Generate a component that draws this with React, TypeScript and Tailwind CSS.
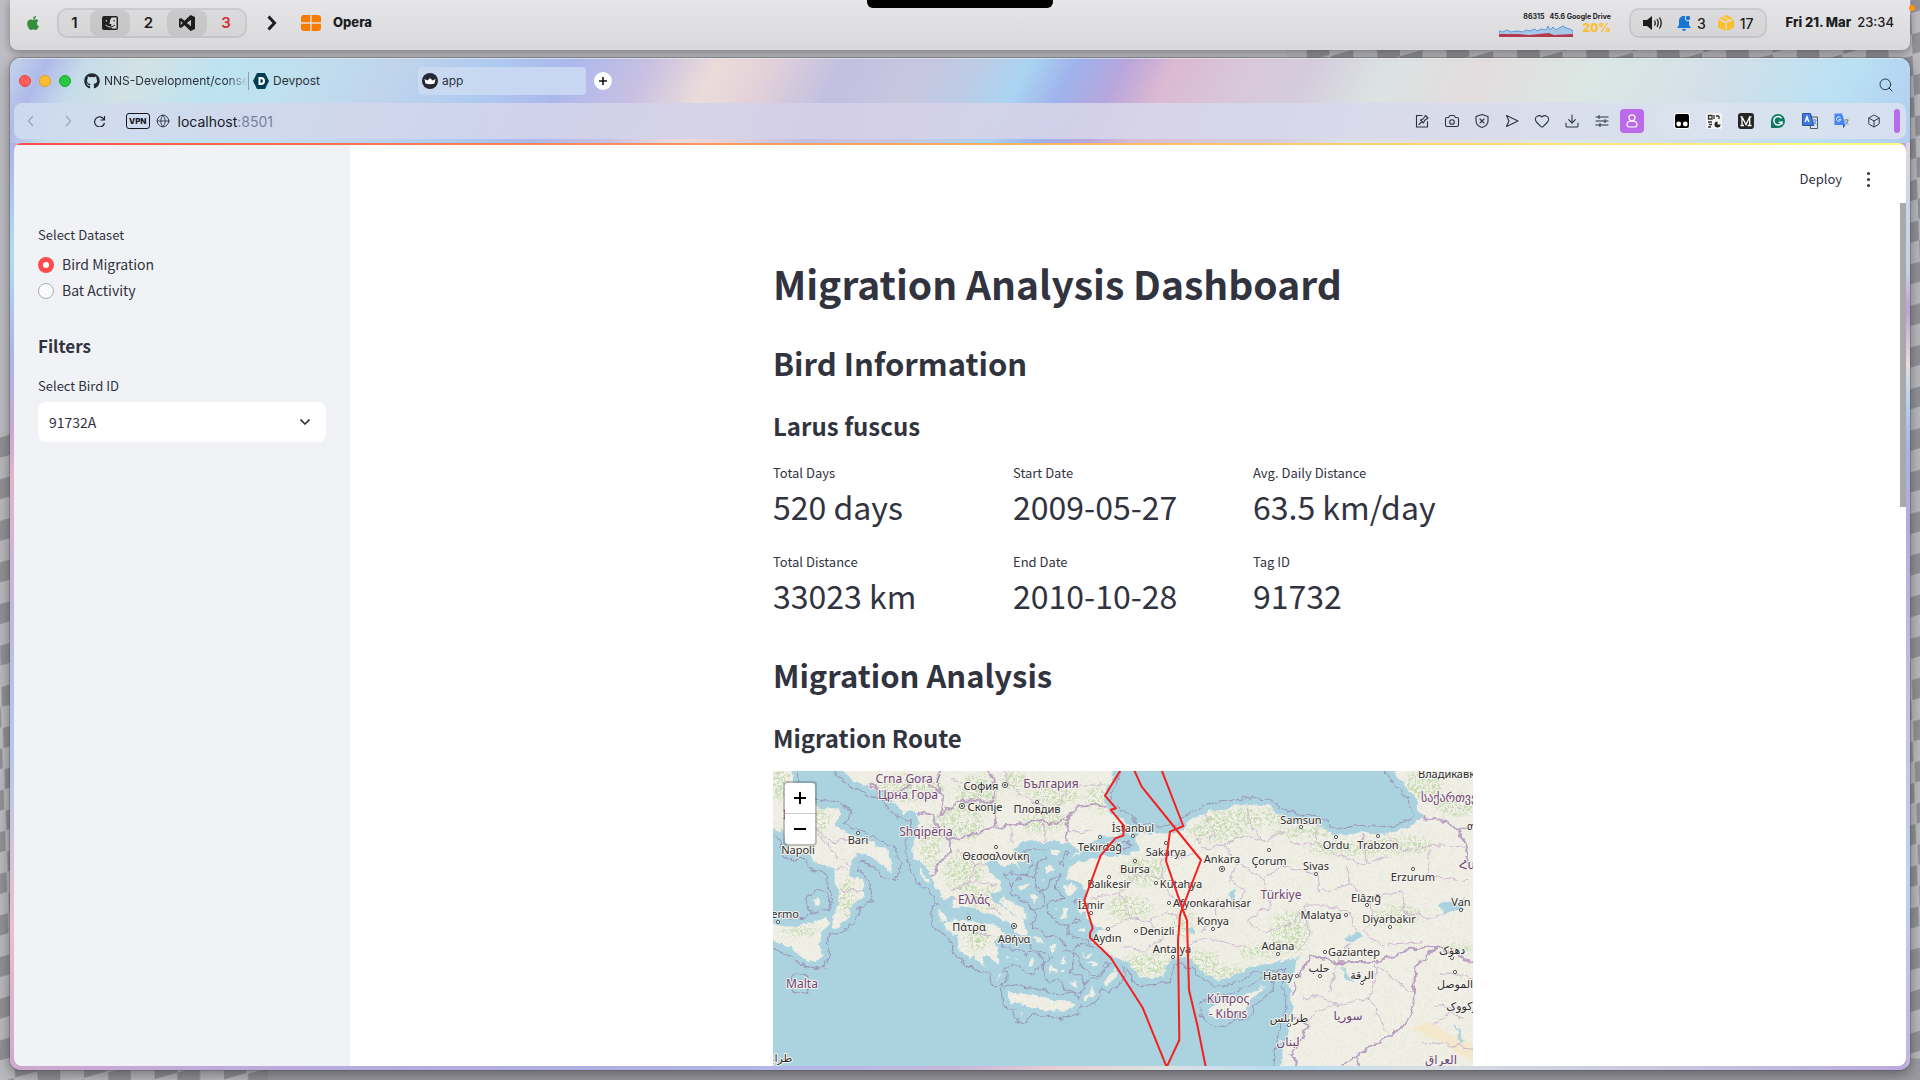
import { useState, type ReactNode } from 'react'
import { FaApple, FaGithub } from 'react-icons/fa'
import { Box, Download, Globe, Heart, Search } from 'lucide-react'

const metrics = [
  { label: 'Total Days', value: '520 days' },
  { label: 'Start Date', value: '2009-05-27' },
  { label: 'Avg. Daily Distance', value: '63.5 km/day' },
  { label: 'Total Distance', value: '33023 km' },
  { label: 'End Date', value: '2010-10-28' },
  { label: 'Tag ID', value: '91732' },
]

// [text, x, baseline, anchor]
type Label = [string, number, number, ('start' | 'middle' | 'end')?]

const countries: Label[] = [
  ['Crna Gora /', 135, 12],
  ['Црна Гора', 135, 28],
  ['България', 278, 17],
  ['Shqipëria', 153, 65],
  ['Italia', 10, 48, 'start'],
  ['Ελλάς', 201, 133],
  ['Malta', 29, 217],
  ['Türkiye', 508, 128],
  ['Κύπρος', 455, 232],
  ['- Kıbrıs', 455, 247],
  ['لبنان', 515, 275],
  ['سوريا', 575, 249],
  ['العراق', 668, 293],
  ['საქართველო', 648, 31, 'start'],
  ['Հայաստան', 686, 98, 'start'],
]

const cities: Label[] = [
  ['София', 208, 19],
  ['Скопје', 212, 40],
  ['Пловдив', 264, 42],
  ['Bari', 85, 73],
  ['Napoli', 25, 83],
  ['Θεσσαλονίκη', 223, 89],
  ['Tekirdağ', 327, 80],
  ['İstanbul', 360, 61],
  ['Bursa', 362, 102],
  ['Balıkesir', 336, 117],
  ['İzmir', 318, 138],
  ['Aydın', 334, 171],
  ['Πάτρα', 196, 160],
  ['Αθήνα', 241, 172],
  ['Palermo', 26, 147, 'end'],
  ['طرابلس', 0, 291],
  ['Sakarya', 393, 85],
  ['Ankara', 449, 92],
  ['Çorum', 496, 94],
  ['Samsun', 528, 53],
  ['Ordu', 563, 78],
  ['Trabzon', 605, 78],
  ['Sivas', 543, 99],
  ['Kütahya', 408, 117],
  ['Afyonkarahisar', 439, 136],
  ['Konya', 440, 154],
  ['Denizli', 384, 164],
  ['Antalya', 399, 182],
  ['Adana', 505, 179],
  ['Malatya', 548, 148],
  ['Elâzığ', 593, 131],
  ['Diyarbakır', 616, 152],
  ['Erzurum', 640, 110],
  ['Van', 688, 135],
  ['Gaziantep', 581, 185],
  ['Hatay', 505, 209],
  ['حلب', 546, 201],
  ['الرقة', 589, 208],
  ['دهۆک', 679, 183],
  ['الموصل', 682, 217],
  ['کرکووک', 692, 239],
  ['طرابلس', 516, 251],
  ['Владикавказ', 645, 7, 'start'],
  ['თბილისი', 694, 59, 'start'],
]

const cityDots = [
  [264, 31], [85, 62], [223, 76], [327, 66], [360, 65], [362, 90], [336, 106], [318, 142], [335, 158],
  [196, 147], [5, 151], [393, 72], [496, 79], [528, 56], [563, 66], [605, 65], [543, 103], [383, 112],
  [396, 132], [440, 158], [363, 160], [400, 186], [505, 183], [573, 144], [594, 134], [617, 156],
  [640, 98], [688, 139], [552, 181], [524, 205], [547, 205], [589, 212], [679, 187], [682, 201], [516, 254],
]

const capitalDots = [[232, 14], [189, 35], [241, 155], [449, 98]]

// Coastlines are stored at three times the drawn size
const landPath = [
  // Italy and Sicily
  'M0 0L60 0L68 60L85 100L150 130L205 130L218 150L200 165L195 180L250 212L300 232L350 260L372 290L366 322L342 310L322 285L290 270L262 264L245 285L240 332L278 350L284 398L245 418L240 450L208 486L182 484L196 440L210 405L195 350L190 312L168 300L135 295L122 262L60 262L40 197L0 185Z',
  'M0 470L60 485L110 477L165 455L178 468L155 505L150 545L157 570L140 592L110 583L60 550L0 522Z',
  // Balkans and mainland Greece
  'M200 0L250 45L300 68L340 85L370 112L400 145L440 140L447 170L440 200L430 235L430 280L462 300L485 335L500 372L520 402L550 398L545 430L600 425L640 445L690 455L720 475L735 500L752 512L772 505L765 470L735 447L700 425L668 408L660 382L700 376L690 350L650 310L640 288L680 285L702 310L722 290L755 312L742 288L768 292L735 262L750 235L800 230L860 232L900 235L925 262L900 290L935 262L960 232L990 218L1030 214L1062 204L1088 212L1080 185L1060 165L1012 132L1000 90L1020 50L1036 0Z',
  'M520 480L560 462L620 472L690 490L702 510L672 522L692 590L685 602L660 570L640 575L647 606L625 590L615 570L600 580L572 560L560 510L535 497Z',
  'M700 396L752 430L778 458L764 466L722 442L690 410Z',
  // Anatolia, the Caucasus and the Levant
  'M1098 215L1110 200L1190 206L1240 195L1256 168L1296 148L1350 130L1440 117L1500 125L1516 142L1570 170L1650 182L1690 216L1770 202L1850 206L1910 190L1955 160L1935 95L1890 45L1860 0L2130 0L2130 920L1530 920L1550 800L1570 720L1555 660L1570 620L1585 576L1540 590L1510 596L1450 600L1390 635L1340 645L1290 610L1250 572L1210 574L1192 600L1180 635L1110 640L1080 592L1040 580L1010 570L978 532L966 512L1000 492L962 472L950 450L925 440L942 405L952 382L930 352L890 342L895 305L925 290L1000 272L1060 272L1110 256Z',
  'M1315 730L1350 715L1395 700L1488 664L1435 710L1425 740L1380 750L1340 762L1315 747Z',
  // Crete, Rhodes and the smaller islands
  'M716 682L770 686L800 695L850 706L905 706L912 724L882 740L830 735L780 725L720 710Z',
  'M1002 655L1020 625L1040 612L1040 635L1012 660Z',
  'M946 705L970 660L974 690Z',
  'M820 305L845 298L855 315L830 325Z',
  'M878 365L905 358L925 375L900 390Z',
  'M876 425L895 428L892 462L878 458Z',
  'M915 495L945 488L940 500Z',
  'M843 256L862 254L862 270L848 270Z',
  'M440 306L462 322L480 350L468 348Z',
  'M505 438L528 445L532 470L510 472Z',
  'M742 372L770 352L776 362L756 380Z',
  'M780 385L802 400L798 412L784 402Z',
  'M790 512L812 520L824 545L800 530Z',
  'M838 545L850 560L862 545L852 535Z',
  'M770 596L790 580L796 592L780 604Z',
  'M836 615L850 600L862 616L842 630Z',
  'M866 590L890 575L886 596Z',
  'M868 618L884 612L882 628Z',
  'M900 658L916 645L922 662Z',
  'M950 590L985 595L975 608Z',
  'M935 560L965 572L958 578Z',
  'M750 742L764 744L756 754Z',
  'M88 648L104 654L98 664L86 658Z',
  'M128 408L148 398L158 412L140 420Z',
  'M680 626L690 632L682 642Z',
  'M814 342L822 340L820 352Z',
  'M850 430L862 430L856 438Z',
  'M710 570L722 574L714 584Z',
  'M738 576L746 578L742 586Z',
].join('')

const woods = [
  [1420, 160, 130, 28], [1340, 200, 90, 26], [1600, 200, 90, 16], [1740, 250, 130, 22], [1900, 240, 90, 26],
  [1120, 320, 70, 40], [1080, 430, 70, 34], [1130, 600, 80, 34], [1290, 590, 60, 36], [1380, 620, 70, 18],
  [1560, 500, 60, 60], [1470, 560, 70, 18], [1880, 450, 80, 30], [1960, 60, 60, 40], [2060, 120, 60, 34],
  [560, 180, 80, 50], [620, 90, 60, 60], [820, 170, 70, 30], [850, 90, 80, 30], [990, 100, 40, 40],
  [420, 70, 100, 40], [580, 320, 60, 60], [650, 400, 60, 30], [480, 250, 30, 60], [620, 520, 40, 40],
  [230, 400, 26, 60], [150, 160, 30, 40], [90, 500, 60, 14], [30, 60, 30, 50], [730, 50, 40, 30], [1240, 470, 26, 50],
  [2070, 550, 50, 14],
]

const borders =
  'M540 225L600 210L660 190L740 180L800 165L850 180L900 152L925 125L985 120L1010 130M445 140L490 150L512 215L545 225L540 262L502 298L495 332L478 332M640 0L680 60L665 110L680 182M300 60L360 92L420 62L450 38L520 90L512 150L560 110L670 110M515 90L500 40L520 0M900 152L890 180L890 232M1585 640L1620 575L1700 592L1830 590L1910 556L2000 545L1936 605L1930 720L1908 782L1710 903M2000 545L2050 570L2110 592M1955 160L2025 165L2062 195L2096 250L2090 310M2062 195L2110 180M1570 755L1612 780L1600 822L1560 870M1560 870L1590 903M1760 870L1770 910M1575 650L1570 690'

const provinces =
  'M60 60L100 110L140 200L190 262L240 300M135 190L180 230L240 225M195 312L245 310M210 380L280 370M700 18L720 60L780 110L860 130L900 60L1000 60M540 40L600 60L640 100M560 250L620 300L600 350L540 380M600 350L680 360M620 300L660 290M520 400L640 410L700 450M600 500L670 510M720 180L730 230M820 180L830 230M890 200L960 200M1280 220L1300 250L1360 240L1420 210L1480 230L1540 200M1300 140L1330 200L1320 230M1430 120L1440 180L1480 230M1540 200L1570 240L1640 230L1700 270L1780 300L1850 270M1640 180L1640 230M1780 210L1790 300M1850 206L1880 260L1980 240L2090 250M1360 240L1400 290L1380 340L1420 380L1400 430M1400 290L1480 340L1540 300L1640 330L1650 380L1740 360L1800 400L1900 380M1480 340L1500 420L1430 470L1480 500L1560 480L1600 420L1660 420L1740 440M1600 420L1620 520L1580 560M1740 360L1730 300M1800 400L1810 460L1780 500L1830 540L1960 530M1900 380L1900 440L1990 460L2090 400M1980 240L1970 330L2090 350M1100 330L1180 340L1210 400L1290 420L1400 430M1180 340L1170 280L1270 270M1100 330L1050 380L960 400M1050 380L1080 460L1000 500M1080 460L1140 470L1180 520L1120 560L1060 540M1140 470L1190 440L1230 460M1230 560L1290 520L1360 530L1430 550M1340 400L1340 470L1290 500M1700 592L1760 500L1740 440M1820 600L1800 700L1850 800M1800 700L1700 720L1640 690L1600 700M1820 600L1930 690M1700 592L1680 680M1600 800L1640 740L1700 720M1990 720L2110 740M2010 620L2110 640M1990 780L2040 740L2080 760M1960 830L2110 850'

const routeWest =
  'M1050 0L1050 18L1005 92L1038 130L1022 134L1062 183L1060 212L1036 220L992 272L943 405L968 490L960 505L960 518L1022 578L1118 728L1190 906L1228 825L1224 530L1230 450L1237 430L1293 285L1220 195L1115 65L1090 10'
const routeEast = 'M1172 8L1240 183L1200 200L1188 288L1237 430L1251 467L1257 675L1282 780L1308 910'

function MapLabels({ items, className }: { items: Label[]; className: string }) {
  return (
    <g className={className}>
      {items.map(([text, x, y, anchor = 'middle'], i) => (
        <text key={i} x={x} y={y} textAnchor={anchor} strokeWidth="2" strokeLinejoin="round" paintOrder="stroke">
          {text}
        </text>
      ))}
    </g>
  )
}

function RouteMap() {
  return (
    <div className="relative overflow-hidden bg-[#aad3df]">
      <svg viewBox="0 0 700 295" className="block w-full" role="img" aria-label="Migration route map">
        <defs>
          <filter id="rough" x="0" y="0" width="100%" height="100%">
            <feTurbulence type="fractalNoise" baseFrequency="0.12" numOctaves="3" seed="4" />
            <feDisplacementMap in="SourceGraphic" scale="8" xChannelSelector="R" yChannelSelector="G" />
          </filter>
          <filter id="speckle" x="0" y="0" width="100%" height="100%">
            <feTurbulence type="fractalNoise" baseFrequency="0.14" numOctaves="4" seed="9" result="n" />
            <feColorMatrix in="n" values="0 0 0 0 0  0 0 0 0 0  0 0 0 0 0  6 0 0 0 -2.7" result="m" />
            <feGaussianBlur in="SourceGraphic" stdDeviation="8" result="b" />
            <feComposite in="b" in2="m" operator="in" />
          </filter>
          <clipPath id="land">
            <path d={landPath} />
          </clipPath>
        </defs>
        <g filter="url(#rough)">
          <rect x="-20" y="-20" width="740" height="340" fill="#aad3df" />
          <g transform="translate(-3 -6) scale(0.33333)">
            <path d={landPath} fill="none" stroke="#9b94b8" strokeWidth="46" strokeLinejoin="round" />
            <path d={landPath} fill="#aad3df" stroke="#aad3df" strokeWidth="40" strokeLinejoin="round" />
            <path d={landPath} fill="#f2efe9" />
            <g clipPath="url(#land)">
              <path d="M1920 790L1980 770L2040 800L2110 840L2110 890L2040 850L1980 820Z" fill="#f8e8cc" />
              <g filter="url(#speckle)">
                <rect width="2130" height="920" fill="#e3ead3" opacity="0.5" />
                {woods.map(([cx, cy, rx, ry], i) => (
                  <ellipse key={i} cx={cx} cy={cy} rx={rx} ry={ry} fill="#c5dcb0" />
                ))}
              </g>
              <path d={provinces} fill="none" stroke="#cdb6cf" strokeWidth="3" />
              <path d={borders} fill="none" stroke="#b9a0c0" strokeWidth="6" />
              <path
                d="M2005 420L2050 405L2075 425L2050 435L2025 445ZM1725 520L1760 505L1775 515L1745 530ZM1715 600L1725 640L1750 655M2055 780L2080 830L2070 840ZM1380 385L1395 375L1400 395L1385 410ZM1258 490L1272 500L1268 515Z"
                fill="#aad3df"
                stroke="#aad3df"
                strokeWidth="3"
              />
            </g>
          </g>
        </g>
        <g fill="#fff" stroke="#555" strokeWidth="1">
          {cityDots.map(([cx, cy], i) => (
            <circle key={i} cx={cx} cy={cy} r="1.6" />
          ))}
          {capitalDots.map(([cx, cy], i) => (
            <g key={i}>
              <circle cx={cx} cy={cy} r="2.6" />
              <circle cx={cx} cy={cy} r="0.8" fill="#333" />
            </g>
          ))}
        </g>
        <MapLabels
          items={countries}
          className="fill-[#6d4673] stroke-[#f6f2ee] font-['Noto_Sans','DejaVu_Sans',sans-serif] text-[12px]"
        />
        <MapLabels
          items={cities}
          className="fill-[#2d2d2d] stroke-[#f6f4ef] font-['Noto_Sans','DejaVu_Sans',sans-serif] text-[11px]"
        />
        <g
          transform="translate(-3 -6) scale(0.33333)"
          fill="none"
          stroke="#f5201f"
          strokeWidth="6"
          strokeLinejoin="round"
        >
          <path d={routeWest} />
          <path d={routeEast} />
        </g>
      </svg>
      <div className="absolute top-2.5 left-2.5 flex flex-col rounded-sm border-2 border-black/20 bg-clip-padding">
        <button type="button" aria-label="Zoom in" className="flex h-[31px] w-[30px] items-center justify-center rounded-t-sm border-b border-[#ccc] bg-white">
          <ZoomSign plus />
        </button>
        <button type="button" aria-label="Zoom out" className="flex size-[30px] items-center justify-center rounded-b-sm bg-white">
          <ZoomSign />
        </button>
      </div>
    </div>
  )
}

function ZoomSign({ plus = false }: { plus?: boolean }) {
  return (
    <svg viewBox="0 0 12 12" className="size-3" stroke="#000" strokeWidth="2">
      <path d={plus ? 'M0 6H12M6 0V12' : 'M0 6H12'} />
    </svg>
  )
}

function ToolIcon({ label, children }: { label: string; children: ReactNode }) {
  return (
    <button type="button" aria-label={label} className="flex size-[30px] items-center justify-center text-[#2c3440]">
      <svg viewBox="0 0 16 16" className="size-4" fill="none" stroke="currentColor" strokeWidth="1.1" strokeLinecap="round" strokeLinejoin="round">
        {children}
      </svg>
    </button>
  )
}

function Extension({ label, children }: { label: string; children: ReactNode }) {
  return (
    <button type="button" aria-label={label} className="flex w-8 items-center justify-center">
      <svg viewBox="0 0 16 16" className="size-4">
        {children}
      </svg>
    </button>
  )
}

function MenuBar() {
  return (
    <header className="relative mx-2.5 flex h-[50px] shrink-0 items-center rounded-b-lg bg-linear-to-b from-[#e6e6e8] to-[#d9d9db] pb-1 font-['Inter',sans-serif] text-[#1d1d1f] shadow-[0_2px_8px_rgba(0,0,0,0.35)]">
      <div className="absolute top-0 left-1/2 h-2 w-[186px] -translate-x-1/2 rounded-b-md bg-black" />
      <FaApple className="ml-[15px] size-4 text-[#388e3c]" />
      <div className="ml-4 flex h-[30px] items-center rounded-[10px] border-2 border-black/8 bg-black/3 text-[15px] font-semibold">
        <span className="w-[31px] text-center">1</span>
        <span className="flex h-[26px] w-10 items-center justify-center rounded-lg bg-black/8">
          <svg viewBox="0 0 16 14" className="h-3.5 w-4">
            <rect width="16" height="14" rx="2" fill="#222" />
            <path d="M9.500 1.500H14.500V12.500H9.800Q9.200 10.500 9.300 8H7.500Q7.500 4 9.500 1.500Z" fill="#d6d6d8" />
            <path d="M4.500 4V5.500" stroke="#d6d6d8" strokeWidth="1.200" />
            <path d="M12 4V5.500" stroke="#222" strokeWidth="1.200" />
            <path d="M3.500 9Q8 12 9.500 10.500" fill="none" stroke="#d6d6d8" strokeWidth="1" />
            <path d="M9.500 10.500Q11.500 10.500 13 9" fill="none" stroke="#222" strokeWidth="1" />
          </svg>
        </span>
        <span className="w-[37px] text-center">2</span>
        <span className="flex h-[26px] w-10 items-center justify-center rounded-lg bg-black/8">
          <svg viewBox="0 0 16 16" className="size-4" fill="#1d1d1f" fillRule="evenodd">
            <path d="M11.500 0L16 2V14L11.500 16L5.500 10.300L2 13L0 12V4L2 3L5.500 5.700ZM12 4.700L7.800 8L12 11.300ZM1.700 6V10L3.700 8Z" />
          </svg>
        </span>
        <span className="w-[38px] text-center text-[#d32f2f]">3</span>
      </div>
      <svg viewBox="0 0 10 16" className="ml-5 h-4 w-2.5" fill="none" stroke="#1d1d1f" strokeWidth="3">
        <path d="M1.500 1.500L7.500 8L1.500 14.500" />
      </svg>
      <svg viewBox="0 0 20 16" className="ml-6 h-4 w-5" fill="#f57c00">
        <path d="M3 0H9.300V7.300H0V3Q0 0 3 0ZM10.700 0H17Q20 0 20 3V7.300H10.700ZM0 8.700H9.300V16H3Q0 16 0 13ZM10.700 8.700H20V13Q20 16 17 16H10.700Z" />
      </svg>
      <span className="ml-3 text-[13px] font-extrabold">Opera</span>

      <div className="ml-auto flex flex-col self-start pt-[13px]">
        <span className="text-right text-[7px] leading-2 font-bold whitespace-pre">86315   45.6 Google Drive</span>
        <div className="flex items-start justify-between gap-2.5">
          <svg viewBox="0 0 74 12" className="mt-1 h-3 w-[74px]">
            <path d="M0 6L4 7L8 5L12 7L18 6L24 7L27 5L31 6L36 4L38 6L42 4L47 5L49 1L51 5L54 2L57 5L60 3L64 1L67 3L71 4L74 6V12H0Z" fill="#a9c8e8" stroke="#5e9bd6" strokeWidth="1" />
            <path d="M0 9L20 9L30 10L50 8L55 10L74 9V12H0Z" fill="#b23a4e" />
          </svg>
          <span className="mt-px text-[12px] leading-3 font-extrabold text-[#fbc02d]">20%</span>
        </div>
      </div>
      <div className="ml-[18px] flex h-[30px] items-center rounded-[10px] border-2 border-black/8 bg-black/3 px-3 text-[14px] font-medium">
        <svg viewBox="0 0 20 14" className="h-3.5 w-5">
          <path d="M0 4H4L9 0V14L4 10H0Z" fill="#1d1d1f" />
          <path d="M11.500 4.500Q13 7 11.500 9.500M14 3Q16.500 7 14 11M16.500 1.500Q20 7 16.500 12.500" fill="none" stroke="#1d1d1f" strokeWidth="1.3" />
        </svg>
        <svg viewBox="0 0 14 16" className="ml-3.5 h-4 w-3.5" fill="#1976d2">
          <path d="M7 1C8 1 8.500 1.300 8.500 1.300A3 3 0 0 0 12 6V10L14 13H0L2 10V6C2 3 4 1 7 1ZM5 14H9Q9 16 7 16T5 14Z" />
          <circle cx="11" cy="3" r="2.200" />
        </svg>
        <span className="ml-1.5">3</span>
        <svg viewBox="0 0 16 16" className="ml-3 size-4" fill="#fbc02d">
          <path d="M8 0L15 3.200L8 6.600L1 3.200ZM0 4.500L7.300 8V16L0 12.500ZM16 4.500L8.700 8V16L16 12.500Z" />
          <path d="M4.500 1.600L11.500 5V7" stroke="#dedee0" strokeWidth="1" fill="none" />
        </svg>
        <span className="ml-1.5">17</span>
      </div>
      <time className="mr-4 ml-[18px] flex gap-1.5 text-[13px]">
        <span className="font-extrabold">Fri 21. Mar</span>
        <span className="font-medium">23:34</span>
      </time>
    </header>
  )
}

function TabStrip() {
  return (
    <div className="flex h-[45px] items-center pl-[9px] font-['Inter',sans-serif] text-[12px] text-[#2b3340]">
      <div className="flex gap-2">
        <button type="button" aria-label="Close" className="size-3 rounded-full border border-[#e0443e] bg-[#ff5f57]" />
        <button type="button" aria-label="Minimise" className="size-3 rounded-full border border-[#dea123] bg-[#febc2e]" />
        <button type="button" aria-label="Full screen" className="size-3 rounded-full border border-[#1aab29] bg-[#28c840]" />
      </div>
      <nav className="ml-3 flex items-center">
        <button type="button" className="flex h-7 w-[165px] items-center gap-1 pl-px text-left">
          <FaGithub className="size-4 shrink-0 text-[#24292f]" />
          <span className="min-w-0 flex-1 overflow-hidden mask-r-from-85% pr-1 whitespace-nowrap">NNS-Development/conse</span>
        </button>
        <span className="h-[18px] w-px bg-[#8f9bb0]" />
        <button type="button" className="flex h-7 w-[169px] items-center gap-1 pl-1 text-left">
          <svg viewBox="0 0 16 16" className="size-4">
            <path d="M4 0H12L16 8L12 16H4L0 8Z" fill="#003e54" />
            <path d="M5.500 4H8Q12 4 12 8T8 12H5.500ZM7.500 6V10Q10 10 10 8T7.500 6Z" fill="#fff" fillRule="evenodd" />
          </svg>
          Devpost
        </button>
        <button type="button" className="flex h-7 w-[168px] items-center gap-1 rounded bg-[#cddaf2]/85 pl-1 text-left">
          <svg viewBox="0 0 16 16" className="size-4">
            <circle cx="8" cy="8" r="8" fill="#262730" />
            <path d="M2.500 6L5.500 7.500L8 5L10.500 7.500L13.500 6L12.500 10.500Q8 12 3.500 10.500Z" fill="#fff" />
          </svg>
          app
        </button>
      </nav>
      <button type="button" aria-label="New tab" className="ml-2 flex size-[18px] items-center justify-center rounded-full bg-white">
        <svg viewBox="0 0 8 8" className="size-2" stroke="#111" strokeWidth="1.6">
          <path d="M0 4H8M4 0V8" />
        </svg>
      </button>
      <button type="button" aria-label="Search tabs" className="mt-2 mr-4 ml-auto">
        <Search className="size-4" strokeWidth={1.5} />
      </button>
    </div>
  )
}

function Toolbar() {
  return (
    <div className="mx-1 flex h-9 gap-0.5 text-[#2c3440]">
      <div className="flex flex-1 items-center rounded-lg bg-linear-to-r from-[#cfdcf0]/90 via-[#d5d0e8]/90 to-[#d9dfee]/90 pr-2.5 pl-3">
        <svg viewBox="0 0 80 12" className="h-3 w-20" fill="none" strokeWidth="1.200">
          <path d="M7 1L2.500 6L7 11M40 1L44.500 6L40 11" stroke="#9aa5bd" />
          <path d="M78 4.500A5 5 0 1 0 78.500 8M78.500 1V5H74.500" stroke="#20242c" />
        </svg>
        <span className="ml-5 rounded-[3px] border border-[#16181d] px-0.5 font-['Inter',sans-serif] text-[8px] leading-[14px] font-extrabold text-[#16181d]">
          VPN
        </span>
        <Globe className="ml-1.5 size-3.5" strokeWidth={1.5} />
        <div role="textbox" aria-label="Address" className="ml-2 flex-1 font-['Inter',sans-serif] text-[14px] text-[#16181d]">
          localhost<span className="text-[#76819b]">:8501</span>
        </div>
        <ToolIcon label="Edit page">
          <path d="M8 2.500H2.500V14H13.500V8.500M5 11.500L8 8.500M6.500 7L9.500 10L10.500 7.500L14 5L11.500 2.500L9 6Z" />
        </ToolIcon>
        <ToolIcon label="Snapshot">
          <path d="M1.500 6Q1.500 4.500 3 4.500H4.500L6 2.500H10L11.500 4.500H13Q14.500 4.500 14.500 6V12Q14.500 13.500 13 13.500H3Q1.500 13.500 1.500 12Z" />
          <circle cx="8" cy="9" r="2.300" />
        </ToolIcon>
        <ToolIcon label="Blocker">
          <path d="M8 1.500L14 3.500V8Q14 12.500 8 14.500Q2 12.500 2 8V3.500ZM6 6L10 10M10 6L6 10" />
        </ToolIcon>
        <ToolIcon label="Send">
          <path d="M2.500 2.500L14 8L2.500 13.500L5 8Z" />
        </ToolIcon>
        <button type="button" aria-label="Favourite" className="flex size-[30px] items-center justify-center">
          <Heart className="size-4" strokeWidth={1.6} />
        </button>
        <button type="button" aria-label="Downloads" className="flex size-[30px] items-center justify-center">
          <Download className="size-4" strokeWidth={1.6} />
        </button>
        <ToolIcon label="Easy setup">
          <path d="M2 4H14M2 8H14M2 12H14M5 2.500V5.500M11 6.500V9.500M6 10.500V13.500" />
        </ToolIcon>
        <button type="button" aria-label="Profile" className="ml-[3px] flex size-6 items-center justify-center rounded bg-[#bb6bea]">
          <svg viewBox="0 0 12 14" className="h-3.5 w-3" fill="none" stroke="#fff" strokeWidth="1.200">
            <circle cx="6" cy="3.800" r="3" />
            <path d="M6 6.800Q11 7 11 10.500Q11 13 8.500 13H3.500Q1 13 1 10.500Q1 7 6 6.800Z" />
          </svg>
        </button>
      </div>
      <div className="flex w-[250px] items-center justify-between rounded-lg bg-[#dbe2ef]/85 pr-1.5 pl-2.5">
        <Extension label="Tampermonkey">
          <rect x="0" y="0" width="16" height="16" rx="3" fill="#fff" />
          <rect x="1" y="1" width="14" height="14" rx="2" fill="#000" />
          <circle cx="4.700" cy="11" r="2.400" fill="#fff" />
          <circle cx="11.300" cy="11" r="2.400" fill="#fff" />
        </Extension>
        <Extension label="QR code">
          <rect width="16" height="16" rx="1" fill="#f3f3f3" />
          <path d="M2.500 2.500H6V6H2.500ZM2 9H6M3 11.500H6M2 14H5M8 2V6M10 3H13M13 3V6" fill="none" stroke="#333" strokeWidth="1.300" />
          <path d="M11.500 8.500A3 3 0 1 0 14.500 11.500H11.500Z" fill="#222" />
        </Extension>
        <Extension label="Medium">
          <rect width="16" height="16" rx="3" fill="#262626" />
          <path d="M2.500 12.500H6M9.500 12.500H13.500M4 4V12.500M4 4L8 11.500L11.700 4V12.500M2.500 3.800H4.500M11 3.800H13.500" fill="none" stroke="#fff" strokeWidth="1.300" />
        </Extension>
        <Extension label="Grammarly">
          <path d="M8 1A7 7 0 1 1 8 15H1V8A7 7 0 0 1 8 1Z" fill="#0f7a63" />
          <path d="M11.500 5.300A4.200 4.200 0 1 0 12 9.200H8.700M12 9.200V11.500" fill="none" stroke="#fff" strokeWidth="1.500" />
        </Extension>
        <Extension label="Translate page">
          <path d="M7.500 4H15.500V15.500H8.500Z" fill="#dfe6f3" stroke="#333" strokeWidth="0.800" />
          <path d="M0.500 0.500H8.500L12 12.500H0.500Z" fill="#3d78e0" stroke="#1f3f7c" strokeWidth="0.800" />
          <path d="M3 9L5 3.500L7 9M3.700 7H6.300" stroke="#fff" strokeWidth="1.200" fill="none" />
          <path d="M11 7H14.500M12.700 6V7M14 7Q13.500 10 11.500 11M11.500 8.500L14.500 11.500" stroke="#4a86ea" strokeWidth="0.900" fill="none" />
        </Extension>
        <Extension label="Google Translate">
          <path d="M6 4H15.500V14.500H9Z" fill="#d8dce4" />
          <path d="M0.500 0.500H8L11.500 12H0.500Z" fill="#4285f4" />
          <path d="M9 12L11.500 12L9 15.500Z" fill="#2b5dbd" />
          <path d="M6.500 4.800A2.200 2.200 0 1 0 6.800 6.600H4.800" fill="none" stroke="#fff" strokeWidth="1" />
          <path d="M10.500 7H14.500M12.500 6V7M14 7Q13.500 10 11.500 11M11.500 8.500L14 11.500" stroke="#6f7a8c" strokeWidth="0.900" fill="none" />
        </Extension>
        <button type="button" aria-label="Extensions" className="flex w-8 items-center justify-center">
          <Box className="size-3.5" strokeWidth={1.7} />
        </button>
        <span className="ml-1 h-6 w-1.5 rounded-full bg-[#bb6bea]" />
      </div>
    </div>
  )
}

function Sidebar() {
  const [dataset, setDataset] = useState('Bird Migration')

  return (
    <aside className="w-[336px] shrink-0 bg-[#f0f2f6] px-6 pt-20">
      <fieldset>
        <legend className="text-[13px] leading-5">Select Dataset</legend>
        <div className="mt-[7px] flex flex-col gap-px">
          {['Bird Migration', 'Bat Activity'].map((name) => (
            <label key={name} className="flex h-[25px] items-center gap-2 text-[14px] leading-[25px]">
              <input
                type="radio"
                name="dataset"
                checked={dataset === name}
                onChange={() => setDataset(name)}
                className="size-4 appearance-none rounded-full border border-[#a9abb5] bg-[#fafafc] checked:border-5 checked:border-[#ff4b4b] checked:bg-white"
              />
              {name}
            </label>
          ))}
        </div>
      </fieldset>
      <h2 className="mt-[31px] text-[17px] leading-6 font-semibold">Filters</h2>
      <label htmlFor="bird" className="mt-[18px] block text-[13px] leading-5">
        Select Bird ID
      </label>
      <div className="relative mt-1.5">
        <select id="bird" className="h-10 w-full appearance-none rounded-lg bg-white px-[11px] text-[14px]">
          <option>91732A</option>
        </select>
        <svg viewBox="0 0 10 6" className="pointer-events-none absolute top-[17px] right-4 h-1.5 w-2.5" fill="none" stroke="#31333f" strokeWidth="1.600">
          <path d="M0.500 0.500L5 5L9.500 0.500" />
        </svg>
      </div>
    </aside>
  )
}

function Dashboard() {
  return (
    <main className="relative min-w-0 flex-1 overflow-hidden bg-white">
      <div className="flex h-[60px] items-center justify-end gap-5 pt-2 pr-8 text-[13px]">
        <button type="button">Deploy</button>
        <button type="button" aria-label="Menu" className="flex w-3 flex-col items-center gap-[3px]">
          <i className="size-[3px] rounded-full bg-[#31333f]" />
          <i className="size-[3px] rounded-full bg-[#31333f]" />
          <i className="size-[3px] rounded-full bg-[#31333f]" />
        </button>
      </div>
      <div className="absolute top-[58px] right-0 h-[304px] w-1.5 bg-[#a9a9ad]" />
      <div className="mx-auto box-content w-[700px] pt-[50px] pr-2.5">
        <h1 className="text-[39px] leading-[56px] font-bold">Migration Analysis Dashboard</h1>
        <h2 className="mt-[30px] text-[31px] leading-11 font-semibold">Bird Information</h2>
        <h3 className="mt-[23px] text-[24px] leading-9 font-semibold">Larus fuscus</h3>
        <dl className="mt-[19px] grid grid-cols-3 gap-x-5 gap-y-4">
          {metrics.map((m) => (
            <div key={m.label} className="h-[73px]">
              <dt className="text-[13px] leading-5">{m.label}</dt>
              <dd className="text-[32px] leading-[46px]">{m.value}</dd>
            </div>
          ))}
        </dl>
        <h2 className="mt-7 text-[31px] leading-11 font-semibold">Migration Analysis</h2>
        <h3 className="mt-[23px] mb-[15px] text-[24px] leading-9 font-semibold">Migration Route</h3>
        <RouteMap />
      </div>
    </main>
  )
}

function Wallpaper() {
  return (
    <svg className="absolute inset-0 -z-10 h-full w-full" aria-hidden="true">
      <defs>
        <pattern id="tiles" width="48" height="40" patternUnits="userSpaceOnUse" patternTransform="rotate(-16) skewX(-14)">
          <rect width="48" height="40" fill="#b9b9be" />
          <path d="M0 0H24V20H0ZM24 20H48V40H24Z" fill="#919197" />
          <path d="M0 20H48M24 0V40" stroke="#c6c6ca" strokeWidth="1" />
        </pattern>
      </defs>
      <rect width="100%" height="100%" fill="#bdbdc3" />
      <rect x="67%" width="33%" height="100%" fill="url(#tiles)" />
      <rect y="40%" width="14%" height="60%" fill="url(#tiles)" />
      <rect x="14%" y="98%" width="86%" height="2%" fill="#9b9aa2" />
    </svg>
  )
}

export default function App() {
  return (
    <div className="relative isolate flex h-screen flex-col overflow-hidden">
      <Wallpaper />
      <MenuBar />
      <div className="absolute top-[5px] right-[5px] size-1.5 rounded-full bg-[#ff9500]" />
      <div className="mx-2.5 mt-2 mb-2.5 flex min-h-0 flex-1 flex-col overflow-hidden rounded-[10px] shadow-[0_0_0_1px_rgba(90,90,100,0.45),0_4px_14px_rgba(0,0,0,0.4)]">
        <div className="bg-[linear-gradient(118deg,#c4d5ea_0%,#b0baea_2%,#c5dcea_4%,#d3e2e4_7%,#bde3f1_11%,#c0e0ee_15%,#c0d4ec_20%,#aecbf0_25%,#acb8ec_29%,#c8c0e2_33%,#ebdcda_36.5%,#e4d2d9_39%,#c2c0e0_43%,#c8c6df_47%,#bccce6_50%,#aad4f2_52.5%,#9fb2ec_55%,#b8a6dc_57.500%,#dbb9d2_60%,#d8c8da_64%,#d4cbdc_67%,#dbe2e2_71%,#e3ddde_76%,#dbe7e4_82%,#d3e0e8_88%,#b9e1f4_95%,#b2cdf0_100%)] pb-1 shadow-[inset_0_1px_0_rgba(255,255,255,0.5)]">
          <TabStrip />
          <Toolbar />
        </div>
        <div className="flex min-h-0 flex-1 bg-[linear-gradient(90deg,#d0a8d0_0%,#b9abdc_14%,#b0aee2_30%,#b4b8e8_42%,#c8b8da_50%,#e8cdd2_55%,#dfe0e0_60%,#b8dcf2_67%,#d8dee2_74%,#c8c4e0_88%,#b8aadc_100%)] pb-1">
          <div className="w-1 shrink-0 bg-[linear-gradient(180deg,#aab4e8_0%,#b0dcf2_12%,#aab8ea_22%,#c8a8d4_31%,#e0b4cc_36%,#c3b6de_50%,#b2c8ee_65%,#e8bfca_85%,#d0a8d0_100%)]" />
          <div className="flex min-w-0 flex-1 flex-col overflow-hidden rounded-lg font-['Noto_Sans_CJK_SC',sans-serif] text-[#31333f]">
            <div className="h-0.5 shrink-0 bg-linear-to-r from-[#ff4b4b] to-[#fffd80]" />
            <div className="flex min-h-0 flex-1">
              <Sidebar />
              <Dashboard />
            </div>
          </div>
          <div className="w-1 shrink-0 bg-[linear-gradient(180deg,#e3d5dc_0%,#c5d8ea_7%,#c8d0e4_14%,#c0a0d8_18%,#e5ddd8_24%,#b4d4f0_28%,#a8b4ea_33%,#b8aadc_41%,#c6c0e0_60%,#bcd4f0_80%,#c4b4dc_100%)]" />
        </div>
      </div>
    </div>
  )
}
